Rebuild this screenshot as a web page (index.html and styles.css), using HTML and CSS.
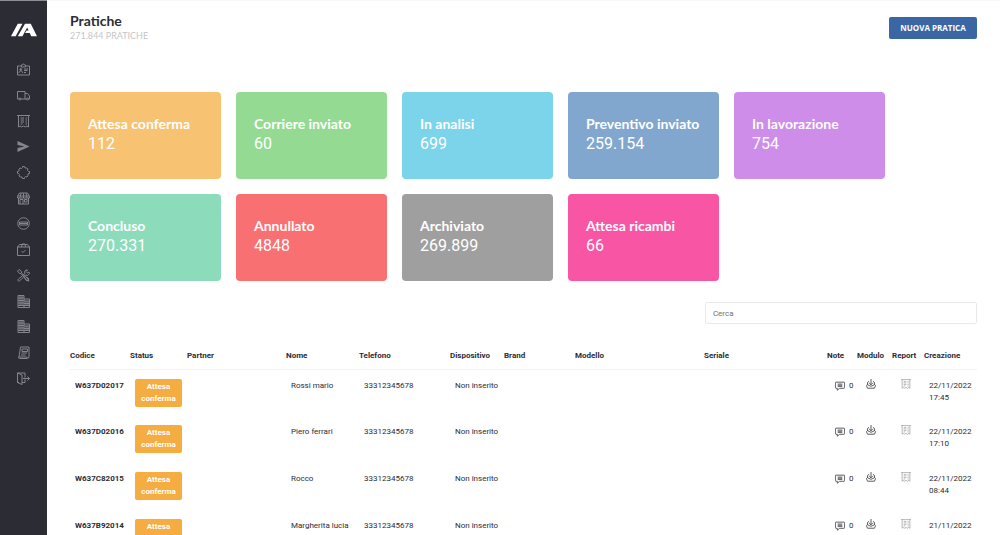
FILE: index.html
```html
<!DOCTYPE html>
<html lang="it">
<head>
<meta charset="utf-8">
<meta name="viewport" content="width=device-width, initial-scale=1">
<title>Pratiche</title>
<link rel="stylesheet" href="styles.css">
</head>
<body>
<svg class="sprite" aria-hidden="true">
  <symbol id="i-badge" viewBox="0 0 26 26"><path d="M9 6H1v18h24V6h-8M9 4h2a2 2 0 0 1 4 0h2v4H9zM4 20c0-3 1-4 3.500-4s3.500 1 3.500 4M7.500 11v3M14 12h8M14 15h7M14 19h4"/><circle cx="7.500" cy="13" r="2"/></symbol>
  <symbol id="i-truck" viewBox="0 0 26 26"><path d="M4 20H1V5h15v15H8M16 9h5l4 5v6h-2M16 20h3"/><circle cx="6" cy="20" r="2"/><circle cx="21" cy="20" r="2"/></symbol>
  <symbol id="i-receipt" viewBox="0 0 26 26"><path d="M0 1h26M3 1v23l3-2 3 2 4-2 4 2 3-2 3 2V1M7 6h7M7 10h7M7 14h7M7 18h4M17 6h3M17 10h3M17 14h3M17 18h3"/></symbol>
  <symbol id="i-send" viewBox="0 0 26 26"><path class="solid" d="M1 2l24 11L1 24v-8l14-3L1 10z"/></symbol>
  <symbol id="i-gear" viewBox="0 0 26 26"><path d="M11 1h4l1 3 3 0 3 2-1 3 2 2h2v4l-3 1 0 3-2 3-3-1-2 2v2h-4l-1-3-3 0-3-2 1-3-2-2H1v-4l3-1 0-3 2-3 3 1 2-2z"/></symbol>
  <symbol id="i-shop" viewBox="0 0 26 26"><path d="M5 2h16l4 7v3H1V9zM1 8h24M3 12v12h20V12M8 2L6 12M13 2v10M18 2l2 10M6 24v-9h6v9M15 15h5v5h-5z"/></symbol>
  <symbol id="i-stop" viewBox="0 0 26 26"><circle cx="13" cy="13" r="11.500"/><path d="M5 10h16v6H5zM5 13h16"/></symbol>
  <symbol id="i-package" viewBox="0 0 26 26"><path d="M1 8h24v17H1zM1 8l4-5h16l4 5M9 8l1-6h6l1 6M9 16l3 3 5-5"/></symbol>
  <symbol id="i-tools" viewBox="0 0 26 26"><path d="M1 4l3-3 5 4v3l13 12 2 4-4-1L8 9H5zM18 2l-3 3 1 4L3 20c-3 3 1 6 3 3l11-11 4 1 4-4-1-3-3 2-3-3 3-3zM15 19l5 5 4-4-5-4"/></symbol>
  <symbol id="i-building" viewBox="0 0 26 26"><path d="M2 1h12v24H2zM14 8h11v17H14M6 1v20M10 1v20M2 6h12M2 11h12M2 16h12M2 21h12M18 12v9M22 12v9M14 12h11M14 17h11M14 21h11"/></symbol>
  <symbol id="i-news" viewBox="0 0 26 26"><path d="M7 2h17v20c0 3-4 3-4 0H3c0 3 1 3 3 3h15M7 2L4 22M10 6h11v5H10zM9 14h11M8 18h9"/></symbol>
  <symbol id="i-exit" viewBox="0 0 26 26"><path d="M10 21H16v-6M16 11V2H1v19h3M1 2l9 4v19l-9-4zM12 13h13M21 9l4 4-4 4"/></symbol>
  <symbol id="i-chat" viewBox="0 0 26 26"><path d="M3 3h20a2 2 0 0 1 2 2v12a2 2 0 0 1-2 2H12l-6 5v-5H3a2 2 0 0 1-2-2V5a2 2 0 0 1 2-2zM7 8h12M7 11h12M7 14h12"/></symbol>
  <symbol id="i-inbox" viewBox="0 0 26 26"><path d="M13 0v15M8 10l5 5 5-5M8 6L4 9v6l9 4 9-4V9l-4-3M4 14l-3 3 3 7h18l3-7-3-3"/></symbol>
</svg>

<nav class="sidebar" aria-label="Menu">
  <a class="logo" href="#" aria-label="Home">
    <svg viewBox="0 0 50 26"><path d="M13 1h9L9 25H0zM27 1h11l12 24H39l-3-6h-9l3-5h4l-3-6-9 17H13z"/></svg>
  </a>
  <div class="menu">
    <a href="#" aria-label="Clienti"><svg><use href="#i-badge"/></svg></a>
    <a href="#" aria-label="Corriere"><svg><use href="#i-truck"/></svg></a>
    <a href="#" aria-label="Pratiche"><svg><use href="#i-receipt"/></svg></a>
    <a href="#" aria-label="Invii"><svg><use href="#i-send"/></svg></a>
    <a href="#" aria-label="Impostazioni"><svg><use href="#i-gear"/></svg></a>
    <a href="#" aria-label="Negozio"><svg><use href="#i-shop"/></svg></a>
    <a href="#" aria-label="Bloccati"><svg><use href="#i-stop"/></svg></a>
    <a href="#" aria-label="Ordini"><svg><use href="#i-package"/></svg></a>
    <a href="#" aria-label="Riparazioni"><svg><use href="#i-tools"/></svg></a>
    <a href="#" aria-label="Aziende"><svg><use href="#i-building"/></svg></a>
    <a href="#" aria-label="Sedi"><svg><use href="#i-building"/></svg></a>
    <a href="#" aria-label="Notizie"><svg><use href="#i-news"/></svg></a>
    <a href="#" aria-label="Esci"><svg><use href="#i-exit"/></svg></a>
  </div>
</nav>

<main class="page">
  <header class="head">
    <div>
      <h1>Pratiche</h1>
      <p>271.844 PRATICHE</p>
    </div>
    <button class="new" type="button">NUOVA PRATICA</button>
  </header>

  <section class="cards">
    <div class="card orange"><h2>Attesa conferma</h2><p>112</p></div>
    <div class="card green"><h2>Corriere inviato</h2><p>60</p></div>
    <div class="card cyan"><h2>In analisi</h2><p>699</p></div>
    <div class="card blue"><h2>Preventivo inviato</h2><p>259.154</p></div>
    <div class="card purple"><h2>In lavorazione</h2><p>754</p></div>
    <div class="card teal"><h2>Concluso</h2><p>270.331</p></div>
    <div class="card red"><h2>Annullato</h2><p>4848</p></div>
    <div class="card grey"><h2>Archiviato</h2><p>269.899</p></div>
    <div class="card pink"><h2>Attesa ricambi</h2><p>66</p></div>
  </section>

  <div class="search"><input type="search" placeholder="Cerca" aria-label="Cerca"></div>

  <table class="list">
    <colgroup>
      <col class="c-code"><col class="c-status"><col class="c-partner"><col class="c-name"><col class="c-phone"><col class="c-device"><col class="c-brand"><col class="c-model"><col class="c-serial"><col class="c-note"><col class="c-form"><col class="c-report"><col class="c-date">
    </colgroup>
    <thead>
      <tr><th>Codice</th><th>Status</th><th>Partner</th><th>Nome</th><th>Telefono</th><th>Dispositivo</th><th>Brand</th><th>Modello</th><th>Seriale</th><th>Note</th><th>Modulo</th><th>Report</th><th>Creazione</th></tr>
    </thead>
    <tbody>
      <tr><td class="code">W637D02017</td><td class="state"><span class="status">Attesa conferma</span></td><td></td><td>Rossi mario</td><td>33312345678</td><td>Non inserito</td><td></td><td></td><td></td><td class="note"><span><svg><use href="#i-chat"/></svg>0</span></td><td class="form"><svg><use href="#i-inbox"/></svg></td><td class="report"><svg><use href="#i-receipt"/></svg></td><td>22/11/2022 17:45</td></tr>
      <tr><td class="code">W637D02016</td><td class="state"><span class="status">Attesa conferma</span></td><td></td><td>Piero ferrari</td><td>33312345678</td><td>Non inserito</td><td></td><td></td><td></td><td class="note"><span><svg><use href="#i-chat"/></svg>0</span></td><td class="form"><svg><use href="#i-inbox"/></svg></td><td class="report"><svg><use href="#i-receipt"/></svg></td><td>22/11/2022 17:10</td></tr>
      <tr><td class="code">W637C82015</td><td class="state"><span class="status">Attesa conferma</span></td><td></td><td>Rocco</td><td>33312345678</td><td>Non inserito</td><td></td><td></td><td></td><td class="note"><span><svg><use href="#i-chat"/></svg>0</span></td><td class="form"><svg><use href="#i-inbox"/></svg></td><td class="report"><svg><use href="#i-receipt"/></svg></td><td>22/11/2022 08:44</td></tr>
      <tr><td class="code">W637B92014</td><td class="state"><span class="status">Attesa conferma</span></td><td></td><td>Margherita lucia</td><td>33312345678</td><td>Non inserito</td><td></td><td></td><td></td><td class="note"><span><svg><use href="#i-chat"/></svg>0</span></td><td class="form"><svg><use href="#i-inbox"/></svg></td><td class="report"><svg><use href="#i-receipt"/></svg></td><td>21/11/2022 17:31</td></tr>
    </tbody>
  </table>
</main>
</body>
</html>
```
FILE: styles.css
```css
* { box-sizing: border-box; }

body {
  margin: 0;
  display: flex;
  height: 100vh;
  background: #fff;
  color: #2c2c36;
  font: 8px/12px Roboto, "Liberation Sans", sans-serif;
}

h1, h2, p { margin: 0; }

svg {
  display: block;
  fill: none;
  stroke: currentColor;
  stroke-width: 2;
}

.sprite { position: absolute; width: 0; height: 0; }
.solid { fill: currentColor; stroke: none; }

/* Sidebar */
.sidebar {
  flex: none;
  width: 47px;
  background: #2c2c35;
  border-top: 1px solid #8a8f92;
}

.logo {
  display: flex;
  align-items: center;
  justify-content: center;
  height: 56px;
  padding-top: 2px;
  color: #fff;
}

.logo svg { width: 26px; height: 14px; fill: currentColor; stroke: none; }

.menu {
  display: grid;
  grid-auto-rows: 1fr;
  height: 334px;
}

.menu a {
  display: flex;
  align-items: center;
  justify-content: center;
  color: #85868c;
}

.menu svg { width: 13px; height: 13px; }

/* Page */
.page {
  flex: 1;
  min-width: 0;
  padding: 11px 23px 0;
  overflow-y: auto;
  scrollbar-width: none;
  border-top: 1px solid #f7f7f7;
}

.head {
  display: flex;
  justify-content: space-between;
  align-items: flex-start;
  height: 80px;
}

.head h1 { font: 700 14px/18px Lato, sans-serif; }
.head p { font: 9px/12px Lato, sans-serif; color: #c6c6c8; }

.new {
  width: 88px;
  height: 22px;
  margin-top: 5px;
  padding: 0;
  border: 0;
  border-radius: 2px;
  background: #3a66a3;
  color: #fff;
  font: 700 8px/12px "Open Sans", sans-serif;
}

/* Status cards */
.cards {
  display: grid;
  grid-template-columns: repeat(5, minmax(0, 1fr));
  gap: 15px;
  padding-right: 92px;
}

.card {
  padding: 22px 18px 25px;
  border-radius: 4px;
  color: #fff;
}

.card h2 { font: 700 14px/19px Lato, sans-serif; white-space: nowrap; }
.card p { font-size: 16px; line-height: 21px; }

.orange { background: #f8c273; }
.green { background: #94da92; }
.cyan { background: #7bd4ea; }
.blue { background: #82a7ce; }
.purple { background: #cd8de9; }
.teal { background: #8cdcbb; }
.red { background: #f87072; }
.grey { background: #9f9f9f; }
.pink { background: #f855a5; }

.search {
  display: flex;
  justify-content: flex-end;
  padding: 21px 0 20px;
}

.search input {
  width: 30%;
  height: 22px;
  padding: 0 7px;
  border: 1px solid #e9e9eb;
  border-radius: 2px;
  color: inherit;
  font: inherit;
}

.search input::placeholder { color: #6f6f76; }

/* Records table */
.list {
  width: 100%;
  table-layout: fixed;
  border-collapse: collapse;
}

.c-code { width: 60px; }
.c-status { width: 57px; }
.c-partner { width: 99px; }
.c-name { width: 73px; }
.c-phone { width: 91px; }
.c-device { width: 54px; }
.c-brand { width: 71px; }
.c-model { width: 129px; }
.c-serial { width: 123px; }
.c-note { width: 30px; }
.c-form { width: 35px; }
.c-report { width: 32px; }
.c-date { width: 53px; }

.list th {
  height: 25px;
  padding: 0;
  border-bottom: 1px solid #f2f2f3;
  text-align: left;
  font-weight: 700;
  white-space: nowrap;
}

.list td {
  height: 47px;
  padding: 10px 0 9px 5px;
  vertical-align: top;
}

.list .code { font-weight: 700; }
.list .state { padding-top: 9px; }

.status {
  display: block;
  width: 47px;
  padding: 2px 4px;
  border-radius: 2px;
  background: #f5ad41;
  color: #fff;
  font-weight: 700;
  text-align: center;
}

.list .note { padding-left: 8px; }
.note span { display: flex; align-items: center; gap: 4px; }
.note svg, .form svg { width: 10px; height: 10px; }
.list .form { padding-top: 9px; padding-left: 9px; }
.list .report { padding-top: 9px; padding-left: 9px; color: #a0a0a3; }
.report svg { width: 10px; height: 10px; }
```
